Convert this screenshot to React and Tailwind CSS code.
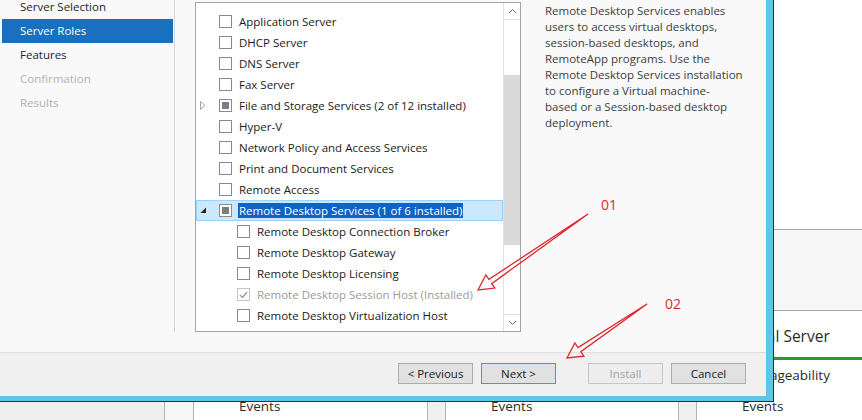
import clsx from 'clsx'

const steps = [
  { label: 'Server Selection' },
  { label: 'Server Roles', active: true },
  { label: 'Features' },
  { label: 'Confirmation', disabled: true },
  { label: 'Results', disabled: true },
]

const roles = [
  { label: 'Application Server' },
  { label: 'DHCP Server' },
  { label: 'DNS Server' },
  { label: 'Fax Server' },
  { label: 'File and Storage Services (2 of 12 installed)', state: 'partial', expander: 'closed' },
  { label: 'Hyper-V' },
  { label: 'Network Policy and Access Services' },
  { label: 'Print and Document Services' },
  { label: 'Remote Access' },
  { label: 'Remote Desktop Services (1 of 6 installed)', state: 'partial', expander: 'open', selected: true },
  { label: 'Remote Desktop Connection Broker', child: true },
  { label: 'Remote Desktop Gateway', child: true },
  { label: 'Remote Desktop Licensing', child: true },
  { label: 'Remote Desktop Session Host (Installed)', child: true, state: 'installed' },
  { label: 'Remote Desktop Virtualization Host', child: true },
]

const description = [
  'Remote Desktop Services enables',
  'users to access virtual desktops,',
  'session-based desktops, and',
  'RemoteApp programs. Use the',
  'Remote Desktop Services installation',
  'to configure a Virtual machine-',
  'based or a Session-based desktop',
  'deployment.',
]

function Checkbox({ state }) {
  if (state === 'partial') {
    return (
      <span className="flex h-[13px] w-[13px] shrink-0 items-center justify-center border border-[#8a8a8a] bg-white">
        <span className="h-[7px] w-[7px] bg-[#7d7d7d]" />
      </span>
    )
  }
  if (state === 'installed') {
    return (
      <span className="flex h-[13px] w-[13px] shrink-0 items-center justify-center border border-[#c4c4c4] bg-white">
        <svg width="9" height="8" viewBox="0 0 9 8">
          <polyline points="1,4 3.5,6.5 8,1" fill="none" stroke="#9a9a9a" strokeWidth="1.3" />
        </svg>
      </span>
    )
  }
  return <span className="h-[13px] w-[13px] shrink-0 border border-[#8a8a8a] bg-white" />
}

function Expander({ type }) {
  if (type === 'closed') {
    return (
      <svg width="6" height="9" viewBox="0 0 6 9">
        <polygon points="0.5,0.5 5,4.5 0.5,8.5" fill="none" stroke="#a6a6a6" />
      </svg>
    )
  }
  if (type === 'open') {
    return (
      <svg width="7" height="7" viewBox="0 0 7 7">
        <polygon points="6,0.5 6,6 0.5,6" fill="#262626" />
      </svg>
    )
  }
  return null
}

function RoleRow({ role }) {
  return (
    <div
      className={clsx(
        'flex h-[21px] items-center border',
        role.selected ? 'border-[#99d1ff] bg-[#cce8ff]' : 'border-transparent'
      )}
    >
      <span className="flex w-[22px] shrink-0 items-center pl-[3px]">
        <Expander type={role.expander} />
      </span>
      {role.child && <span className="w-[18px] shrink-0" />}
      <Checkbox state={role.state} />
      {role.selected ? (
        <span className="ml-[6px] h-[15px] bg-[#0f63c6] px-[1px] leading-[15px] text-white">{role.label}</span>
      ) : (
        <span className={clsx('ml-[7px] whitespace-nowrap', role.state === 'installed' ? 'text-[#9b9b9b]' : 'text-[#1a1a1a]')}>
          {role.label}
        </span>
      )}
    </div>
  )
}

function Chevron({ down }) {
  return (
    <svg width="9" height="6" viewBox="0 0 9 6">
      <polyline
        points={down ? '1,1 4.5,4.5 8,1' : '1,5 4.5,1.5 8,5'}
        fill="none"
        stroke="#6a6a6a"
        strokeWidth="1"
      />
    </svg>
  )
}

function Button({ children, variant }) {
  return (
    <button
      className={clsx(
        'h-[21px] w-[75px] border text-[11.5px] leading-none',
        variant === 'default' && 'border-[#4a94da] bg-[#e1e1e1] text-[#1a1a1a]',
        variant === 'disabled' && 'border-[#c6c6c6] bg-[#ededed] text-[#a3a3a3]',
        !variant && 'border-[#adadad] bg-[#e1e1e1] text-[#1a1a1a]'
      )}
    >
      {children}
    </button>
  )
}

// tiles 1 and 2 sit under the wizard, only their last row shows
function Tile({ strip, stripBg, content, covered }) {
  return (
    <div className="flex h-full">
      <div className={clsx('h-full border-l border-[#b4b4b4]', strip, stripBg)} />
      <div className={clsx('h-full border-l border-[#b4b4b4] bg-white pl-[45px]', content)}>
        <div className="h-[46px] pt-[15px] text-[15.5px] leading-[20px] text-[#2b2b2b]">
          {!covered && 'Local Server'}
        </div>
        <div className="h-[3px] bg-[#1ea51e]" />
        <div className="h-[29px] pt-[5px] text-[13.5px] leading-[20px] text-[#2b2b2b]">
          {!covered && 'Manageability'}
        </div>
        <div className="h-[29px] pt-[7px] text-[13.5px] leading-[20px] text-[#2b2b2b]">Events</div>
      </div>
    </div>
  )
}

export default function App() {
  return (
    <div className="relative h-[420px] w-[862px] overflow-hidden bg-white font-['Open_Sans',sans-serif]">
      {/* server manager behind the wizard */}
      <div className="flex h-full flex-col">
        <div className="h-[230px] border-b border-[#a8a8a8] bg-white" />
        <div className="h-[81px] border-b border-[#a8a8a8] bg-[#f6f6f6]" />
        <div className="flex flex-1">
          <div className="h-full w-[164px] bg-[#efefef]" />
          <Tile strip="w-[29px]" stripBg="bg-[#f6f6f6]" content="w-[234px]" covered />
          <Tile strip="w-[18px]" stripBg="bg-[#f0f0f0]" content="w-[233px]" covered />
          <div className="flex-1">
            <Tile strip="w-[18px]" stripBg="bg-[#f0f0f0]" content="w-[166px]" />
          </div>
        </div>
      </div>

      {/* wizard window */}
      <div className="absolute left-0 top-0 h-[402px] w-[774px] border-b border-r border-[#22323d]">
        <div className="flex h-full flex-col border-b-[5px] border-r-[7px] border-[#62c4e7] bg-[#f9f9f9] text-[11.5px]">
          <div className="flex h-[352px]">
            <nav className="h-[332px] w-[175px] shrink-0 border-r border-[#d6d6d6] pl-[2px] pr-[1px]">
              <div className="-mt-[5px]">
                {steps.map((s) => (
                  <div
                    key={s.label}
                    className={clsx(
                      'flex h-6 items-center pl-[18px]',
                      s.active && 'bg-[#1a70be] text-white',
                      s.disabled && 'text-[#b0b0b0]',
                      !s.active && !s.disabled && 'text-[#1e1e1e]'
                    )}
                  >
                    {s.label}
                  </div>
                ))}
              </div>
            </nav>

            <div className="ml-[20px] mt-[2px] flex h-[330px] w-[326px] shrink-0 border border-[#a6a6a6] bg-white">
              <div className="flex-1 pt-[8px]">
                {roles.map((r) => (
                  <RoleRow key={r.label} role={r} />
                ))}
              </div>
              <div className="flex w-[17px] flex-col border-l border-[#e2e2e2]">
                <div className="flex h-[17px] items-center justify-center border-b border-[#e2e2e2]">
                  <Chevron />
                </div>
                <div className="flex-1">
                  <div className="mt-[55px] h-[170px] bg-[#dadada]" />
                </div>
                <div className="flex h-[17px] items-center justify-center border-t border-[#e2e2e2]">
                  <Chevron down />
                </div>
              </div>
            </div>

            <div className="ml-[24px] mt-[3px] leading-[16px] text-[#3c3c3c]">
              {description.map((line) => (
                <div key={line} className="whitespace-nowrap">
                  {line}
                </div>
              ))}
            </div>
          </div>

          <div className="flex flex-1 justify-end gap-2 border-t border-[#dfdfdf] bg-[#f0f0f0] pr-[20px] pt-[10px]">
            <Button>&lt; Previous</Button>
            <Button variant="default">Next &gt;</Button>
            <div className="w-[16px]" />
            <Button variant="disabled">Install</Button>
            <Button>Cancel</Button>
          </div>
        </div>
      </div>

      {/* red annotations */}
      <svg className="pointer-events-none absolute left-0 top-0" width="862" height="420" viewBox="0 0 862 420">
        <polygon
          points="588,214 488.9,279.4 485.8,274.9 478,290 494.8,288.1 491.7,283.6"
          fill="none"
          stroke="#e0262b"
          strokeWidth="1.3"
        />
        <polygon
          points="647,304 578,347.5 574.9,343 567,358 583.9,356.2 580.8,351.7"
          fill="none"
          stroke="#e0262b"
          strokeWidth="1.3"
        />
        <text x="601" y="210" fill="#d92a30" fontSize="14" fontFamily="Open Sans, sans-serif">01</text>
        <text x="665" y="309" fill="#d92a30" fontSize="14" fontFamily="Open Sans, sans-serif">02</text>
      </svg>
    </div>
  )
}
